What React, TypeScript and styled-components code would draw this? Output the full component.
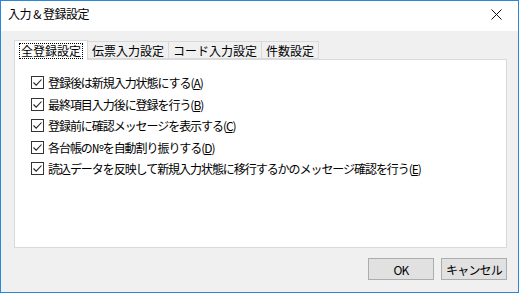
import React, { useState } from 'react'
import styled, { createGlobalStyle } from 'styled-components'

const GlobalStyle = createGlobalStyle`
    html, body {
        margin: 0;
        padding: 0;
        background: #ffffff;
    }
    * {
        box-sizing: border-box;
    }
`

const FONT = `"Noto Sans CJK JP", "Noto Sans", "Liberation Sans", sans-serif`

const Window = styled.div`
    width: 519px;
    height: 293px;
    border: 1px solid #2b88d8;
    display: flex;
    flex-direction: column;
    font-family: ${FONT};
    font-size: 12px;
    color: #000;
    overflow: hidden;
`

const TitleBar = styled.div`
    height: 30px;
    background: #ffffff;
    display: flex;
    align-items: center;
    justify-content: space-between;
    padding-left: 7px;
`

const Title = styled.span`
    font-size: 12px;
    letter-spacing: -0.5px;
    margin-top: -6px;
`

const CloseButton = styled.div`
    width: 44px;
    height: 30px;
    display: flex;
    align-items: center;
    justify-content: center;
    margin-top: -4px;
`

const Body = styled.div`
    flex: 1;
    background: #f0f0f0;
    padding: 9px 11px 0 13px;
    display: flex;
    flex-direction: column;
`

const TabStrip = styled.div`
    display: flex;
    align-items: flex-end;
    height: 19px;
`

const Tab = styled.div<{ $active?: boolean }>`
    height: ${p => (p.$active ? '20px' : '18px')};
    margin-bottom: ${p => (p.$active ? '-1px' : '0')};
    margin-left: ${p => (p.$active ? '0' : '-1px')};
    background: ${p => (p.$active ? '#ffffff' : '#f0f0f0')};
    border: 1px solid #d9d9d9;
    border-bottom: ${p => (p.$active ? 'none' : '1px solid #d9d9d9')};
    padding: 0 ${p => (p.$active ? '5px' : '4px')};
    display: flex;
    align-items: center;
    letter-spacing: 0;
    position: relative;
    z-index: ${p => (p.$active ? 2 : 1)};
    &:first-child {
        margin-left: 0;
    }
`

const FocusLabel = styled.span`
    outline: 1px dotted #000;
    padding: 0 1px;
    line-height: 14px;
`

const Panel = styled.div`
    height: 189px;
    background: #ffffff;
    border: 1px solid #d9d9d9;
    padding: 12px 0 0 16px;
    display: flex;
    flex-direction: column;
`

const Row = styled.label`
    height: 21.5px;
    display: flex;
    align-items: center;
    gap: 4px;
    letter-spacing: -1.05px;
    white-space: nowrap;
`

const Box = styled.span`
    width: 13px;
    height: 13px;
    border: 1px solid #333333;
    background: #ffffff;
    display: flex;
    align-items: center;
    justify-content: center;
    flex-shrink: 0;
`

const Key = styled.span`
    text-decoration: underline;
    text-underline-offset: 1px;
`

const Footer = styled.div`
    display: flex;
    justify-content: flex-end;
    gap: 7px;
    padding-top: 10px;
`

const Button = styled.button`
    width: 66px;
    height: 22px;
    background: #e1e1e1;
    border: 1px solid #adadad;
    font-family: ${FONT};
    font-size: 12px;
    letter-spacing: -0.8px;
    color: #000;
    padding: 0;
`

const Check = () => (
    <svg width="11" height="11" viewBox="0 0 11 11">
        <path d="M1.5 5.5 L4.2 8.2 L9.5 2.5" fill="none" stroke="#222" strokeWidth="1.1" />
    </svg>
)

const options = [
    { text: '登録後は新規入力状態にする', key: 'A' },
    { text: '最終項目入力後に登録を行う', key: 'B' },
    { text: '登録前に確認メッセージを表示する', key: 'C' },
    { text: '各台帳の№を自動割り振りする', key: 'D' },
    { text: '読込データを反映して新規入力状態に移行するかのメッセージ確認を行う', key: 'E' },
]

const tabs = ['全登録設定', '伝票入力設定', 'コード入力設定', '件数設定']

export default function App() {
    const [active] = useState(0)

    return (
        <>
            <GlobalStyle />
            <Window>
                <TitleBar>
                    <Title>入力 &amp; 登録設定</Title>
                    <CloseButton>
                        <svg width="11" height="11" viewBox="0 0 11 11">
                            <path d="M0.5 0.5 L10.5 10.5 M10.5 0.5 L0.5 10.5" stroke="#111" strokeWidth="1" />
                        </svg>
                    </CloseButton>
                </TitleBar>
                <Body>
                    <TabStrip>
                        {tabs.map((t, i) => (
                            <Tab key={t} $active={i === active}>
                                {i === active ? <FocusLabel>{t}</FocusLabel> : t}
                            </Tab>
                        ))}
                    </TabStrip>
                    <Panel>
                        {options.map(o => (
                            <Row key={o.key}>
                                <Box>
                                    <Check />
                                </Box>
                                <span>
                                    {o.text}(<Key>{o.key}</Key>)
                                </span>
                            </Row>
                        ))}
                    </Panel>
                    <Footer>
                        <Button>OK</Button>
                        <Button>キャンセル</Button>
                    </Footer>
                </Body>
            </Window>
        </>
    )
}
